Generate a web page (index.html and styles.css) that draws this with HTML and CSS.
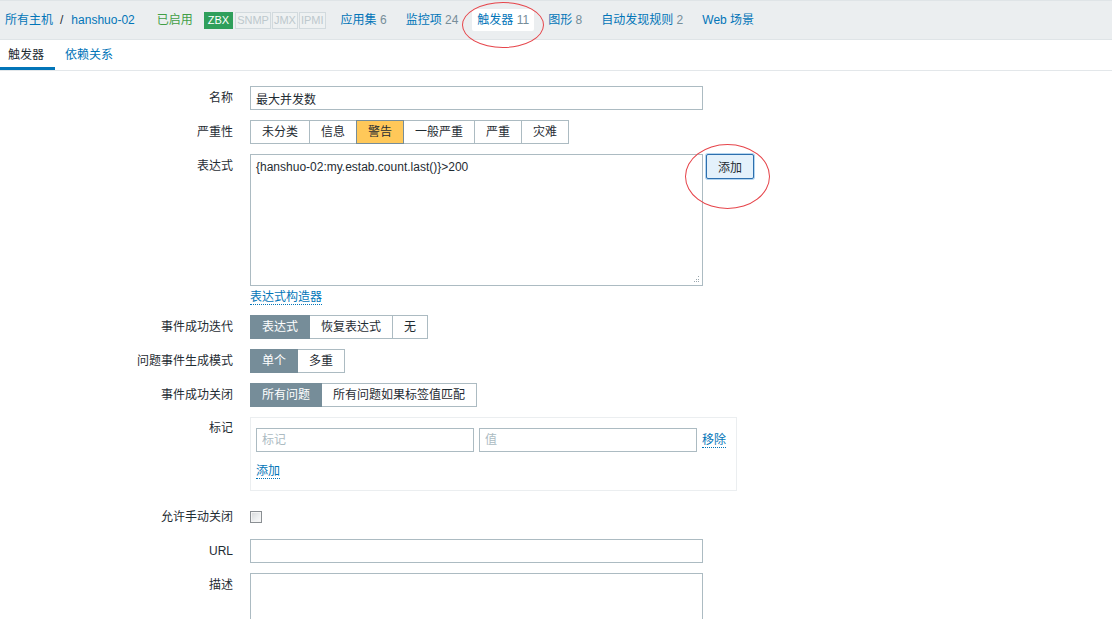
FILE: index.html
```html
<!DOCTYPE html>
<html lang="zh-CN">
<head>
<meta charset="utf-8">
<title>触发器</title>
<link rel="stylesheet" href="styles.css">
</head>
<body>
<div class="page">
  <header class="hostbar">
    <div class="crumbs"><a class="link" href="#">所有主机</a><span class="sep">/</span><a class="link" href="#">hanshuo-02</a></div>
    <span class="status">已启用</span>
    <div class="badges">
      <span class="badge on">ZBX</span><span class="badge">SNMP</span><span class="badge">JMX</span><span class="badge">IPMI</span>
    </div>
    <ul class="hostnav">
      <li><a class="link" href="#">应用集</a> <span class="count">6</span></li>
      <li><a class="link" href="#">监控项</a> <span class="count">24</span></li>
      <li class="selected"><a class="link" href="#">触发器</a> <span class="count">11</span></li>
      <li><a class="link" href="#">图形</a> <span class="count">8</span></li>
      <li><a class="link" href="#">自动发现规则</a> <span class="count">2</span></li>
      <li><a class="link" href="#">Web 场景</a></li>
    </ul>
  </header>

  <nav class="tabs">
    <span class="tab active">触发器</span>
    <a class="tab link" href="#">依赖关系</a>
  </nav>

  <form class="form">
    <div class="row">
      <div class="label">名称</div>
      <input class="text" type="text" value="最大并发数">
    </div>

    <div class="row">
      <div class="label">严重性</div>
      <div class="seg">
        <span class="opt">未分类</span><span class="opt">信息</span><span class="opt warn">警告</span><span class="opt">一般严重</span><span class="opt">严重</span><span class="opt">灾难</span>
      </div>
    </div>

    <div class="row">
      <div class="label">表达式</div>
      <div class="field">
        <div class="expr-wrap">
          <textarea class="area expr">{hanshuo-02:my.estab.count.last()}&gt;200</textarea>
          <svg class="grip" width="7" height="7" viewBox="0 0 7 7"><rect x="5" y="0" width="1" height="1" fill="#9aa7ae"/><rect x="3" y="3" width="1" height="1" fill="#9aa7ae"/><rect x="5" y="3" width="1" height="1" fill="#9aa7ae"/><rect x="1" y="5" width="1" height="1" fill="#9aa7ae"/><rect x="3" y="5" width="1" height="1" fill="#9aa7ae"/><rect x="5" y="5" width="1" height="1" fill="#9aa7ae"/></svg>
        </div>
        <div class="under"><a class="link dotted" href="#">表达式构造器</a></div>
      </div>
      <button class="btn-add" type="button">添加</button>
    </div>

    <div class="row">
      <div class="label">事件成功迭代</div>
      <div class="seg">
        <span class="opt sel">表达式</span><span class="opt">恢复表达式</span><span class="opt">无</span>
      </div>
    </div>

    <div class="row">
      <div class="label">问题事件生成模式</div>
      <div class="seg">
        <span class="opt sel">单个</span><span class="opt">多重</span>
      </div>
    </div>

    <div class="row">
      <div class="label">事件成功关闭</div>
      <div class="seg">
        <span class="opt sel">所有问题</span><span class="opt">所有问题如果标签值匹配</span>
      </div>
    </div>

    <div class="row">
      <div class="label tight">标记</div>
      <div class="tagbox">
        <div class="tagrow">
          <input class="text tag" type="text" placeholder="标记">
          <input class="text tag" type="text" placeholder="值">
          <a class="link dotted" href="#">移除</a>
        </div>
        <div class="tagadd"><a class="link dotted" href="#">添加</a></div>
      </div>
    </div>

    <div class="row check-row">
      <div class="label">允许手动关闭</div>
      <span class="checkbox"></span>
    </div>

    <div class="row">
      <div class="label">URL</div>
      <input class="text" type="text">
    </div>

    <div class="row">
      <div class="label">描述</div>
      <textarea class="area desc"></textarea>
    </div>
  </form>

  <div class="mark mark-tab"></div>
  <div class="mark mark-btn"></div>
</div>
</body>
</html>
```

FILE: styles.css
```css
html, body {
  margin: 0;
  padding: 0;
  overflow: hidden;
  background: #ffffff;
}

body {
  font-family: "Liberation Sans", "Noto Sans CJK SC", sans-serif;
  font-size: 12px;
  line-height: 14px;
  color: #1f2c33;
}

.page {
  position: relative;
  width: 1112px;
  height: 619px;
}

.link {
  color: #0275b8;
  text-decoration: none;
}

/* host bar */
.hostbar {
  display: flex;
  align-items: center;
  height: 38px;
  padding-left: 5px;
  background: #ebeef0;
  border-top: 1px solid #dfe4e7;
  border-bottom: 1px solid #dfe4e7;
}

.crumbs {
  display: flex;
  align-items: center;
}

.sep {
  margin: 0 8px 0 7px;
  color: #1f2c33;
}

.status {
  margin-left: 22px;
  color: #429e47;
}

.badges {
  display: flex;
  margin-left: 11px;
}

.badge {
  height: 15px;
  line-height: 15px;
  padding: 0 1px;
  margin-right: 1px;
  border: 1px solid #d2dade;
  color: #bdc8cd;
  background: #eef1f2;
  font-size: 11px;
}

.badge.on {
  padding: 0 3px;
  background: #2f9f5b;
  border-color: #2f9f5b;
  color: #ffffff;
  margin-right: 2px;
}

.hostnav {
  display: flex;
  list-style: none;
  margin: 0 0 0 9px;
  padding: 0;
  gap: 9px;
}

.hostnav li {
  padding: 4px 5px;
  line-height: 14px;
}

.hostnav li.selected {
  background: #ffffff;
  border-radius: 2px;
}

.count {
  color: #768d99;
}

/* tabs */
.tabs {
  display: flex;
  height: 30px;
  border-bottom: 1px solid #e3e7ea;
}

.tab {
  display: block;
  line-height: 30px;
  padding: 0 10px;
  box-sizing: border-box;
  height: 30px;
}

.tab.active {
  padding: 0 11px 0 8px;
  color: #1f2c33;
  border-bottom: 3px solid #0275b8;
  line-height: 30px;
}

/* form */
.form {
  padding-top: 15px;
}

.row {
  display: flex;
  align-items: flex-start;
  margin-bottom: 10px;
}

.label {
  width: 250px;
  box-sizing: border-box;
  padding-right: 17px;
  text-align: right;
  line-height: 24px;
  flex: none;
}

.label.tight {
  line-height: 22px;
}

.text {
  width: 453px;
  height: 24px;
  box-sizing: border-box;
  margin: 0;
  padding: 0 5px;
  border: 1px solid #acbbc2;
  border-radius: 0;
  font-family: "Liberation Sans", "Noto Sans CJK SC", sans-serif;
  font-size: 12px;
  color: #1f2c33;
  background: #ffffff;
  outline: none;
}

.text::placeholder {
  color: #acbbc2;
}

.seg {
  display: flex;
}

.opt {
  display: block;
  height: 24px;
  box-sizing: border-box;
  line-height: 22px;
  padding: 0 11px;
  border: 1px solid #acbbc2;
  margin-left: -1px;
  background: #ffffff;
  color: #1f2c33;
}

.opt:first-child {
  margin-left: 0;
}

.opt.warn {
  background: #ffc859;
  border-color: #768d99;
  position: relative;
}

.opt.sel {
  background: #768d99;
  border-color: #768d99;
  color: #ffffff;
  position: relative;
}

.field {
  display: flex;
  flex-direction: column;
}

.expr-wrap {
  position: relative;
  width: 453px;
  height: 132px;
}

.area {
  display: block;
  width: 453px;
  box-sizing: border-box;
  margin: 0;
  padding: 5px 5px;
  border: 1px solid #acbbc2;
  border-radius: 0;
  resize: none;
  font-family: "Liberation Sans", "Noto Sans CJK SC", sans-serif;
  font-size: 12px;
  line-height: 14px;
  color: #1f2c33;
  outline: none;
  background: #ffffff;
}

.expr {
  height: 132px;
}

.desc {
  height: 80px;
}

.grip {
  position: absolute;
  right: 3px;
  bottom: 3px;
}

.under {
  margin-top: 3px;
  line-height: 16px;
}

.dotted {
  border-bottom: 1px dotted #0275b8;
}

.btn-add {
  margin: 0 0 0 3px;
  height: 25px;
  padding: 0 11px;
  font-family: "Liberation Sans", "Noto Sans CJK SC", sans-serif;
  font-size: 12px;
  color: #1f2c33;
  background: #e4f1fb;
  border: 1px solid #2d6fae;
  border-radius: 2px;
  box-shadow: 0 0 0 1px #b5d5ef;
}

/* tags */
.tagbox {
  width: 487px;
  box-sizing: border-box;
  border: 1px solid #ebeef0;
  padding: 10px 9px 10px 5px;
}

.tagrow {
  display: flex;
  align-items: center;
  gap: 5px;
}

.text.tag {
  width: 218px;
}

.tagadd {
  margin-top: 10px;
  line-height: 18px;
}

/* checkbox */
.check-row {
  padding-top: 4px;
}

.checkbox {
  display: block;
  width: 12px;
  height: 12px;
  box-sizing: border-box;
  margin-top: 6px;
  border: 1px solid #8a8f93;
  background: linear-gradient(135deg, #d6d8da 0%, #eef0f1 60%, #fafafa 100%);
  box-shadow: inset 0 0 0 1px #f4f4f4;
}

/* red annotation ellipses */
.mark {
  position: absolute;
  border: 1px solid #e6454b;
  border-radius: 50%;
  pointer-events: none;
}

.mark-tab {
  left: 462px;
  top: 2px;
  width: 80px;
  height: 44px;
}

.mark-btn {
  left: 685px;
  top: 144px;
  width: 83px;
  height: 63px;
}
```
